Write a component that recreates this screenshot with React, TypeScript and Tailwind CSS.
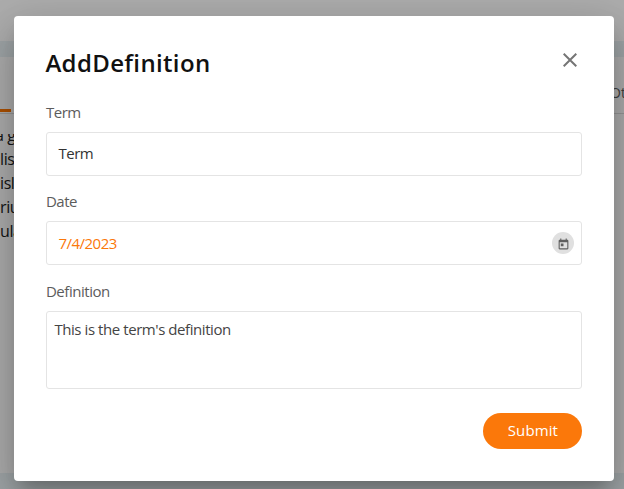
import type { ReactNode } from "react";

const LINES = ["a g", "lis", "isl", "riu", "ula"] as const;

function Field({ label, children }: { label: string; children: ReactNode }) {
  return (
    <label className="flex flex-col">
      <span className="-ml-[0.5px] h-[27px] text-[15px] leading-5 tracking-[-0.45px] text-[#5c5c5c]">{label}</span>
      {children}
    </label>
  );
}

function CloseIcon() {
  return (
    <svg viewBox="0 0 14 14" className="size-3.5" fill="none" stroke="#757575" strokeWidth="2">
      <path d="M.7.7l12.6 12.6M13.3.7L.7 13.3" />
    </svg>
  );
}

function CalendarIcon() {
  return (
    <svg viewBox="0 0 24 24" className="mt-0.5 size-[13px]" fill="#5f5f5f">
      <path d="M19 3h-1V1h-2v2H8V1H6v2H5c-1.11 0-1.99.9-1.99 2L3 19c0 1.1.89 2 2 2h14c1.1 0 2-.9 2-2V5c0-1.1-.9-2-2-2zm0 16H5V8h14v11zM7 10h5v5H7z" />
    </svg>
  );
}

/* The page that sits under the backdrop */
function Page() {
  return (
    <div className="flex h-full flex-col overflow-hidden bg-white">
      <div className="h-[41px] shrink-0" />
      <div className="h-4 shrink-0 bg-[#ebf3f6]" />
      <div className="flex h-[57px] shrink-0 items-end justify-between border-b border-[#dedede]">
        <span className="mb-px h-[3px] w-[11px] bg-[#ff7800]" />
        <span className="mb-[10px] w-[14px] text-[14px] leading-5 whitespace-nowrap text-[#5c5c5c]">Ot</span>
      </div>
      <div className="mt-[20px] h-[130px] w-8 shrink-0 overflow-hidden">
        <div className="-mt-[11px] text-[16px] leading-6 tracking-[-0.4px] text-[#222]">
          {LINES.map((line) => (
            <p key={line} className="whitespace-nowrap first:-ml-[5px]">
              {line}
            </p>
          ))}
        </div>
      </div>
      <div className="grow" />
      <div className="h-4 shrink-0 bg-[#ebf3f6]" />
    </div>
  );
}

export default function App() {
  return (
    <div className="relative h-screen overflow-hidden font-['Open_Sans',sans-serif]">
      <Page />
      <div className="absolute inset-0 bg-black/32 pt-4 pl-[14.4px]">
        <div
          role="dialog"
          aria-label="AddDefinition"
          className="flex h-[465px] w-[600px] flex-col rounded bg-white px-8 shadow-[0_11px_15px_-7px_rgba(0,0,0,0.2),0_24px_38px_3px_rgba(0,0,0,0.14),0_9px_46px_8px_rgba(0,0,0,0.12)]"
        >
          <header className="flex h-[86px] shrink-0 justify-between pt-[31px]">
            <h1 className="-ml-px text-[24px] leading-8 font-semibold tracking-[0.35px] text-[#111]">AddDefinition</h1>
            <button type="button" aria-label="Close" className="mt-1.5 mr-[5px] size-3.5">
              <CloseIcon />
            </button>
          </header>

          <form className="flex flex-col">
            <Field label="Term">
              <input
                defaultValue="Term"
                className="mt-[3px] h-11 rounded-[3px] border border-[#e4e4e4] px-[11px] pb-0.5 text-[15px] tracking-[-0.45px] text-[#333] outline-none"
              />
            </Field>
            <div className="h-[15px]" />
            <Field label="Date">
              <span className="mt-[3px] flex h-11 items-center rounded-[3px] border border-[#e4e4e4] pr-[7px] pl-[11px]">
                <input
                  defaultValue="7/4/2023"
                  className="min-w-0 grow text-[15px] tracking-[-0.5px] text-[#fb780a] outline-none"
                />
                <span className="flex size-[22px] items-center justify-center rounded-full bg-[#e0e0e0]">
                  <CalendarIcon />
                </span>
              </span>
            </Field>
            <div className="h-4" />
            <Field label="Definition">
              <textarea
                defaultValue="This is the term's definition"
                className="mt-[3px] h-[78px] resize-none rounded-[3px] border border-[#e4e4e4] px-[7px] pt-1.5 text-[15px] leading-[22px] tracking-[-0.43px] text-[#444] outline-none"
              />
            </Field>
            <button
              type="button"
              className="mt-6 h-9 w-[99px] self-end rounded-full bg-[#fb780a] pb-0.5 text-[15px] tracking-[0.1px] text-white"
            >
              Submit
            </button>
          </form>
        </div>
      </div>
    </div>
  );
}
